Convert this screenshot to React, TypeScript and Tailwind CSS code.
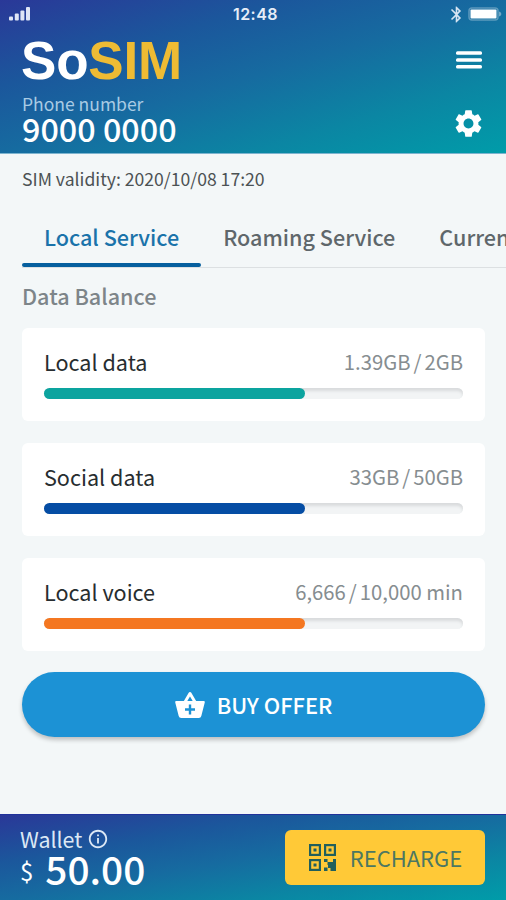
import React from 'react';
import { MdBluetooth, MdInfoOutline, MdSettings } from 'react-icons/md';

interface Balance {
  label: string;
  used: string;
  total: string;
  percent: number;
  color: string;
}

const balances: Balance[] = [
  { label: 'Local data', used: '1.39GB', total: '2GB', percent: 62.3, color: 'bg-[#0ca49f]' },
  { label: 'Social data', used: '33GB', total: '50GB', percent: 62.3, color: 'bg-[#054da4]' },
  { label: 'Local voice', used: '6,666', total: '10,000 min', percent: 62.3, color: 'bg-[#f47721]' },
];

const tabs = ['Local Service', 'Roaming Service', 'Current Plan'];

const SignalIcon = () => (
  <svg className="w-[22px] h-[14px]" viewBox="0 0 22 14" fill="#dfe6f6">
    <rect x="0" y="9.5" width="4" height="4" rx="1" />
    <rect x="5.8" y="6.5" width="4" height="7" rx="1" />
    <rect x="11.4" y="3.5" width="4" height="10" rx="1" />
    <rect x="17" y="0" width="4" height="13.5" rx="1" />
  </svg>
);

const BatteryIcon = () => (
  <svg className="w-[34px] h-[14px]" viewBox="0 0 34 14">
    <rect x="1" y="1" width="29" height="12" rx="3" fill="none" stroke="#fff" strokeWidth="1.5" strokeOpacity="0.3" />
    <rect x="2.5" y="2.5" width="26" height="9" rx="1" fill="#fff" />
    <path d="M31 4.5c1.6.5 2.3 1.3 2.3 2.5S32.6 9 31 9.5z" fill="#fff" fillOpacity="0.4" />
  </svg>
);

const MenuIcon = () => (
  <svg className="w-[26px] h-[18px]" viewBox="0 0 26 18" fill="#fff">
    <rect x="0" y="0.3" width="26" height="3.5" rx="1.5" />
    <rect x="0" y="7.2" width="26" height="3.5" rx="1.5" />
    <rect x="0" y="14.1" width="26" height="3.5" rx="1.5" />
  </svg>
);

const BasketIcon = () => (
  <svg className="w-[30px] h-[28px]" viewBox="0 0 30 28">
    <path d="M10 11l5-8.5 5 8.5" fill="none" stroke="#fff" strokeWidth="3" strokeLinejoin="round" />
    <path
      d="M1.4 9.9h27.2a1.2 1.2 0 0 1 1.15 1.5L26.3 25a2.6 2.6 0 0 1-2.5 2H6.2a2.6 2.6 0 0 1-2.5-2L.25 11.4a1.2 1.2 0 0 1 1.15-1.5z"
      fill="#fff"
    />
    <path d="M15 13.5v10M10 18.5h10" stroke="#1c92d5" strokeWidth="2.4" />
  </svg>
);

const QrIcon = () => (
  <svg className="w-[27px] h-[27px]" viewBox="0 0 27 27" fill="#215f5c">
    <g fill="none" stroke="#215f5c" strokeWidth="2.2">
      <rect x="1.1" y="1.1" width="9.8" height="9.8" />
      <rect x="16.1" y="1.1" width="9.8" height="9.8" />
      <rect x="1.1" y="16.1" width="9.8" height="9.8" />
    </g>
    <path d="M4.5 4.5h3v3h-3zM19.5 4.5h3v3h-3zM4.5 19.5h3v3h-3z" />
    <path d="M15 15h3.5v3H15zM18.5 18h3v3h-3zM15 23.5h3.5V27H15zM24 15h3v12h-5.5v-3H19v-3h2.5v-3H24z" />
  </svg>
);

const Header: React.FC = () => (
  <header className="h-[154px] pt-[5px] pl-[22px] pr-[21px] bg-[linear-gradient(to_bottom_right,#2a3898_0%,#1b579c_28%,#166ba0_50%,#0b86a3_75%,#009ca9_100%)] border-b border-[#7db4cf] text-white">
    <div className="-ml-[13px] -mr-[15px] h-[18px] flex items-center justify-between">
      <SignalIcon />
      <span className="ml-[33px] text-[16px] leading-[18px] font-semibold tracking-[0.5px] font-['Inter',sans-serif] text-[#e6edf8]">12:48</span>
      <div className="-mr-0.5 flex items-center gap-0.5">
        <MdBluetooth className="w-[19px] h-[19px] text-[#d6e4f2]" />
        <BatteryIcon />
      </div>
    </div>
    <div className="mt-2 flex justify-between">
      <div>
        <h1 className="-ml-px h-[58px] text-[53px] leading-[60px] font-bold tracking-[-0.2px] font-['Liberation_Sans',Arial,sans-serif]">
          So<span className="text-[#eebb34]">SIM</span>
        </h1>
        <p className="mt-1 text-[17.5px] leading-[22px] text-[#a9cbe4]">Phone number</p>
        <p className="text-[32.3px] leading-[26px] font-medium">9000 0000</p>
      </div>
      <div className="pt-5 flex flex-col items-center">
        <MenuIcon />
        <MdSettings className="mt-[38px] w-[33px] h-[33px]" />
      </div>
    </div>
  </header>
);

const BalanceCard: React.FC<{ balance: Balance }> = ({ balance }) => (
  <div className="h-[93px] px-[22px] pt-5 bg-white rounded-md">
    <div className="flex justify-between text-[21.6px] leading-7 whitespace-nowrap">
      <span className="text-[#272d30]">{balance.label}</span>
      <span className="text-[20.3px] leading-[27px] text-[#868d90]">
        {balance.used}
        <span className="mx-[3px]">/</span>
        {balance.total}
      </span>
    </div>
    <div className="mt-3 h-[11px] rounded-full bg-[#f2f4f5] shadow-[inset_0_3px_3px_#d9dbdd]">
      <div className={`h-full rounded-full ${balance.color}`} style={{ width: `${balance.percent}%` }} />
    </div>
  </div>
);

const WalletBar: React.FC = () => (
  <footer className="h-[86px] pl-5 pr-[21px] flex items-start justify-between bg-[linear-gradient(to_bottom_right,#2a3898_0%,#1b579c_28%,#166ba0_50%,#0b86a3_75%,#009ca9_100%)] border-t border-[#20329a] text-white">
    <div className="pt-[11px]">
      <div className="flex items-center gap-[5px] text-[21.4px] leading-[26px] text-[#dce8f5]">
        Wallet
        <MdInfoOutline className="w-[22px] h-[22px]" />
      </div>
      <div className="-mt-px h-[34px] flex items-center gap-3 leading-[34px]">
        <span className="pt-1.5 text-[24px]">$</span>
        <span className="text-[38.8px] font-medium">50.00</span>
      </div>
    </div>
    <button className="mt-[15px] w-[200px] h-[55px] pl-px flex items-center justify-center gap-[14px] rounded-md bg-[#ffc937] text-[22px] text-[#4c7762]">
      <QrIcon />
      RECHARGE
    </button>
  </footer>
);

const App: React.FC = () => {
  return (
    <div className="w-[506px] h-[900px] flex flex-col overflow-hidden bg-[#f3f7f8] font-['Noto_Sans_CJK_SC',sans-serif]">
      <Header />
      <main className="flex-1 pl-[22px] pr-[21px] pt-[13px]">
        <p className="text-[17.6px] leading-6 text-[#4c5254]">SIM validity: 2020/10/08 17:20</p>
        <nav className="mt-[19px] -mr-[21px] h-[58px] flex overflow-hidden border-b border-[#dce0e2]">
          {tabs.map((tab, i) => (
            <button
              key={tab}
              className={`shrink-0 px-[22px] pt-[13px] text-[21.6px] leading-7 text-left font-medium whitespace-nowrap flex flex-col justify-between ${
                i === 0 ? 'text-[#1a73aa]' : 'text-[#5f676b]'
              }`}
            >
              {tab}
              {i === 0 && <span className="-mx-[22px] self-stretch h-1 rounded-sm bg-[#065f9e]" />}
            </button>
          ))}
        </nav>
        <h2 className="mt-[14px] text-[21.6px] leading-7 font-medium text-[#7d8589]">Data Balance</h2>
        <div className="mt-[18px] flex flex-col gap-[22px]">
          {balances.map((balance) => (
            <BalanceCard key={balance.label} balance={balance} />
          ))}
        </div>
        <button className="mt-[21px] w-full h-[65px] pt-px flex items-center justify-center gap-3 rounded-full bg-[#1c92d5] text-[21.8px] font-medium text-white shadow-[0_3px_4px_rgba(0,0,0,0.22)]">
          <BasketIcon />
          BUY OFFER
        </button>
      </main>
      <WalletBar />
    </div>
  );
};

export default App;
